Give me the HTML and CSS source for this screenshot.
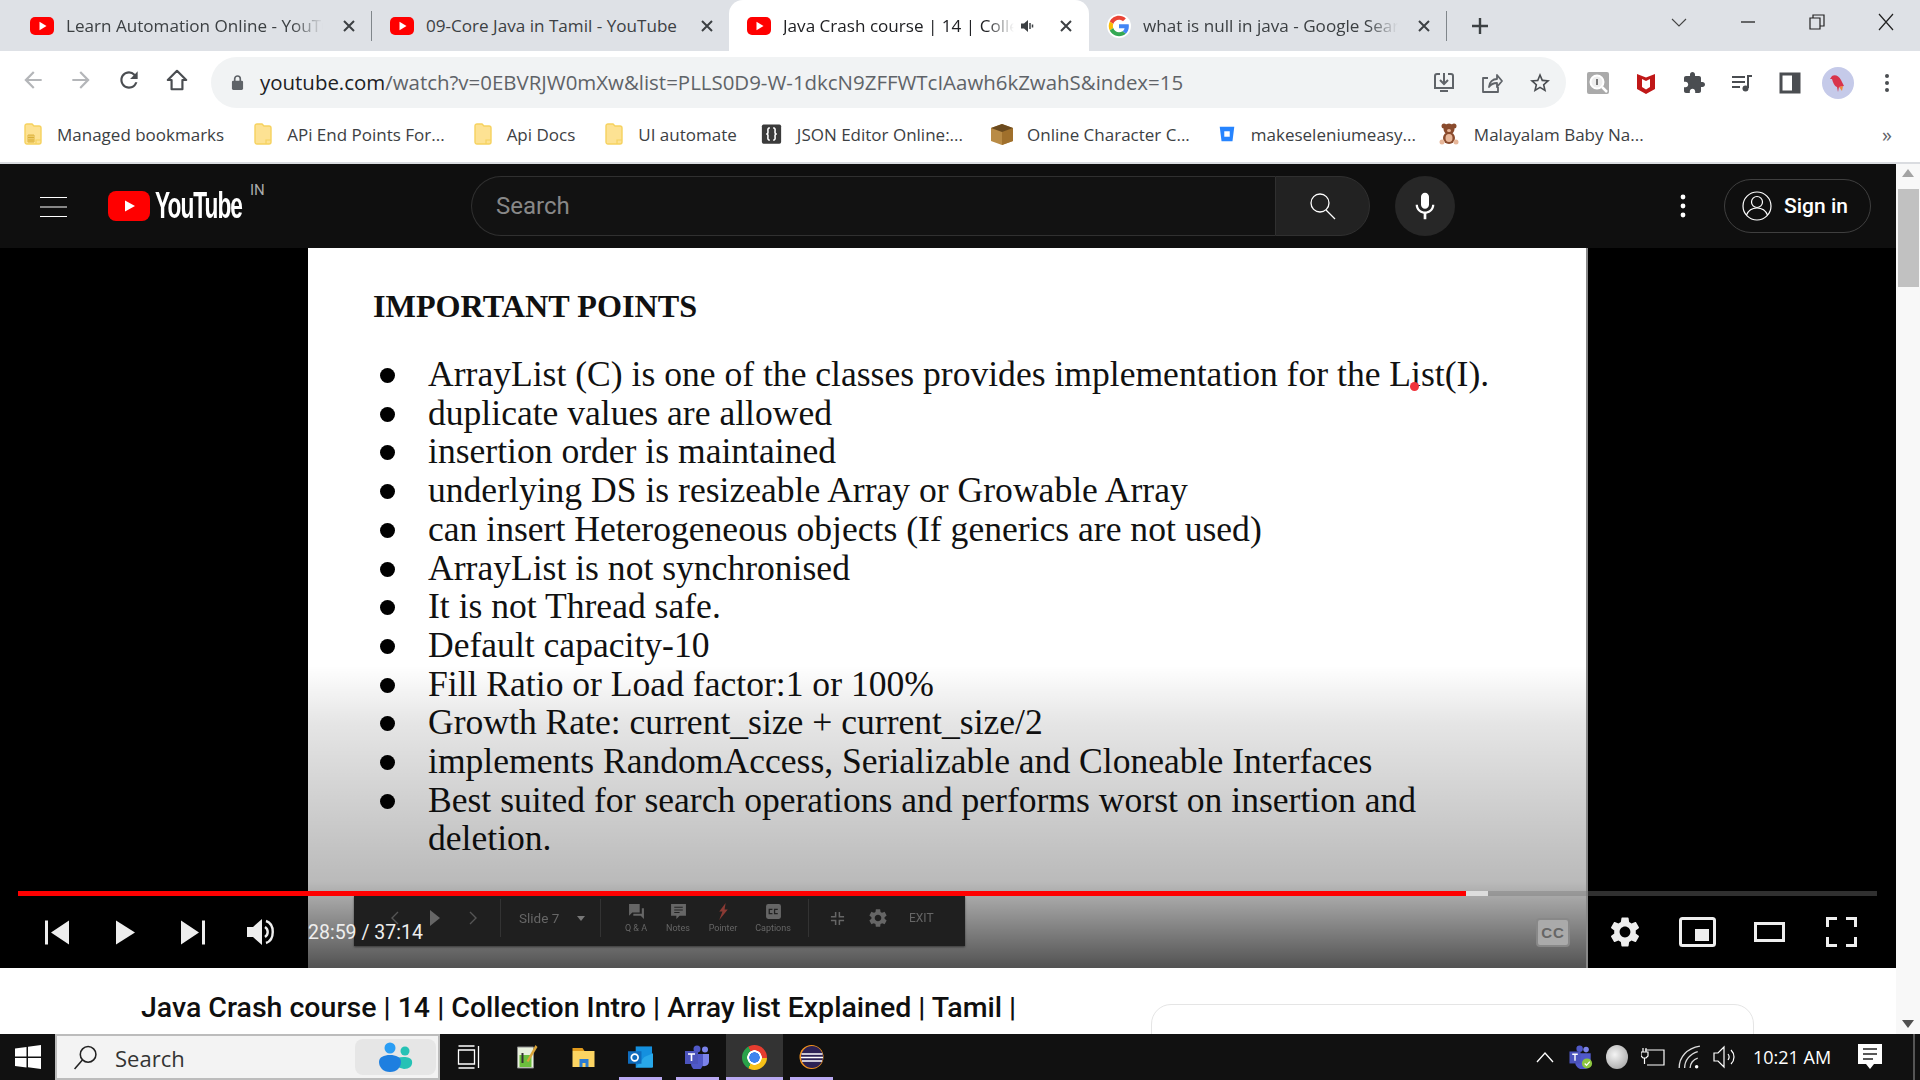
FILE: index.html
```html
<!DOCTYPE html>
<html lang="en">
<head>
  <meta charset="UTF-8" />
  <title>Java Crash course | 14 | Collection Intro | Array list Explained | Tamil | - YouTube</title>
  <link rel="stylesheet" href="styles.css">
</head>
<body>
  <svg class="defs" width="0" height="0">
    <symbol id="yt" viewBox="0 0 24 24"><rect x="0" y="3" width="24" height="18" rx="5" fill="#f00"/><path d="M9.5 7.8 16.5 12 9.5 16.2z" fill="#fff"/></symbol>
    <symbol id="close" viewBox="0 0 16 16"><path d="M3 3 13 13M13 3 3 13" stroke="#3c4043" stroke-width="2" fill="none"/></symbol>
    <symbol id="folder" viewBox="0 0 18 22"><path d="M1 3a2 2 0 0 1 2-2h5l2 2h5a2 2 0 0 1 2 2v14a2 2 0 0 1-2 2H3a2 2 0 0 1-2-2z" fill="#fde293" stroke="#f6d25f" stroke-width="1.4"/><path d="M12 21v-4h5" fill="none" stroke="#f6d25f" stroke-width="1.2"/></symbol>
    <symbol id="gear" viewBox="0 0 24 24"><path d="M19.14 12.94c.04-.3.06-.61.06-.94 0-.32-.02-.64-.07-.94l2.03-1.58c.18-.14.23-.41.12-.61l-1.92-3.32c-.12-.22-.37-.29-.59-.22l-2.39.96c-.5-.38-1.03-.7-1.62-.94l-.36-2.54c-.04-.24-.24-.41-.48-.41h-3.84c-.24 0-.43.17-.47.41l-.36 2.54c-.59.24-1.13.57-1.62.94l-2.39-.96c-.22-.08-.47 0-.59.22L2.74 8.87c-.12.21-.08.47.12.61l2.03 1.58c-.05.3-.09.63-.09.94s.02.64.07.94l-2.03 1.58c-.18.14-.23.41-.12.61l1.92 3.32c.12.22.37.29.59.22l2.39-.96c.5.38 1.03.7 1.62.94l.36 2.54c.05.24.24.41.48.41h3.84c.24 0 .44-.17.47-.41l.36-2.54c.59-.24 1.13-.56 1.62-.94l2.39.96c.22.08.47 0 .59-.22l1.92-3.32c.12-.22.07-.47-.12-.61l-2.01-1.58zM12 15.6c-1.98 0-3.6-1.62-3.6-3.6s1.62-3.6 3.6-3.6 3.6 1.62 3.6 3.6-1.62 3.6-3.6 3.6z" fill="currentColor"/></symbol>
  </svg>

  <div class="tabstrip">
    <div class="tab sep">
      <svg class="favicon"><use href="#yt"/></svg>
      <span class="tab-title">Learn Automation Online - YouTube</span>
      <svg class="tab-close"><use href="#close"/></svg>
    </div>
    <div class="tab">
      <svg class="favicon"><use href="#yt"/></svg>
      <span class="tab-title">09-Core Java in Tamil - YouTube</span>
      <svg class="tab-close"><use href="#close"/></svg>
    </div>
    <div class="tab active">
      <svg class="favicon"><use href="#yt"/></svg>
      <span class="tab-title">Java Crash course | 14 | Collection Intro</span>
      <svg class="tab-sound" viewBox="0 0 16 16"><path d="M1 5.5h3L8 2v12L4 10.5H1z" fill="#3c4043"/><path d="M10 5v6M12.5 6.5v3" stroke="#3c4043" stroke-width="1.5"/></svg>
      <svg class="tab-close"><use href="#close"/></svg>
    </div>
    <div class="tab sep">
      <svg class="favicon" viewBox="-4 -4 56 56">
        <circle cx="24" cy="24" r="28" fill="#fff"/>
        <path fill="#EA4335" d="M24 9.5c3.54 0 6.71 1.22 9.21 3.6l6.85-6.85C35.9 2.38 30.47 0 24 0 14.62 0 6.51 5.38 2.56 13.22l7.98 6.19C12.43 13.72 17.74 9.5 24 9.5z"/>
        <path fill="#4285F4" d="M46.98 24.55c0-1.57-.15-3.09-.38-4.55H24v9.02h12.94c-.58 2.96-2.26 5.48-4.78 7.18l7.73 6c4.51-4.18 7.09-10.36 7.09-17.65z"/>
        <path fill="#FBBC05" d="M10.53 28.59c-.48-1.45-.76-2.99-.76-4.59s.27-3.14.76-4.59l-7.98-6.19C.92 16.46 0 20.12 0 24c0 3.88.92 7.54 2.56 10.78l7.97-6.19z"/>
        <path fill="#34A853" d="M24 48c6.48 0 11.93-2.13 15.89-5.81l-7.73-6c-2.15 1.45-4.92 2.3-8.16 2.3-6.26 0-11.57-4.22-13.47-9.91l-7.98 6.19C6.51 42.62 14.62 48 24 48z"/>
      </svg>
      <span class="tab-title">what is null in java - Google Search</span>
      <svg class="tab-close"><use href="#close"/></svg>
    </div>
    <svg class="new-tab" viewBox="0 0 20 20"><path d="M10 2v16M2 10h16" stroke="#3c4043" stroke-width="2.4"/></svg>
    <div class="win-buttons">
      <svg viewBox="0 0 20 20"><path d="M3 7l7 7 7-7" stroke="#444" fill="none" stroke-width="1.1"/></svg>
      <svg viewBox="0 0 20 20"><path d="M3 10h14" stroke="#222" stroke-width="1.3"/></svg>
      <svg viewBox="0 0 20 20"><path d="M3 6h10v11H3zM6 6V3h11v11h-4" stroke="#222" fill="none" stroke-width="1.2"/></svg>
      <svg viewBox="0 0 20 20"><path d="M3 2l14 16M17 2 3 18" stroke="#222" fill="none" stroke-width="1.2"/></svg>
    </div>
  </div>

  <div class="toolbar">
    <svg class="nav-icon" viewBox="0 0 24 24"><path d="M20 11H7.83l5.59-5.59L12 4l-8 8 8 8 1.41-1.41L7.83 13H20v-2z" fill="#b4b6b9"/></svg>
    <svg class="nav-icon" viewBox="0 0 24 24"><path d="M4 11h12.17l-5.59-5.59L12 4l8 8-8 8-1.41-1.41L16.17 13H4v-2z" fill="#b4b6b9"/></svg>
    <svg class="nav-icon" viewBox="0 0 24 24"><path d="M17.65 6.35A7.958 7.958 0 0012 4c-4.42 0-7.99 3.58-7.99 8s3.57 8 7.99 8c3.73 0 6.84-2.55 7.73-6h-2.08A5.99 5.99 0 0112 18c-3.31 0-6-2.69-6-6s2.69-6 6-6c1.66 0 3.14.69 4.22 1.78L13 11h7V4l-2.35 2.35z" fill="#4a4d51"/></svg>
    <svg class="nav-icon" viewBox="0 0 24 24"><path d="M12 3.5 3.5 12H7v8.5h10V12h3.5z" fill="none" stroke="#4a4d51" stroke-width="2" stroke-linejoin="round"/></svg>
    <div class="omnibox">
      <svg class="lock" viewBox="0 0 14 18"><path d="M4 8V5a3 3 0 0 1 6 0v3" fill="none" stroke="#5f6368" stroke-width="1.8"/><rect x="1" y="7" width="12" height="10" rx="1.5" fill="#5f6368"/></svg>
      <span class="url"><b>youtube.com</b>/watch?v=0EBVRJW0mXw&amp;list=PLLS0D9-W-1dkcN9ZFFWTcIAawh6kZwahS&amp;index=15</span>
      <svg class="omni-icon" viewBox="0 0 24 24"><path d="M8 3H5a2 2 0 0 0-2 2v12h18V5a2 2 0 0 0-2-2h-3M12 2v10M8 9l4 4 4-4M8 20h8" fill="none" stroke="#5f6368" stroke-width="2"/></svg>
      <svg class="omni-icon" viewBox="0 0 24 24"><path d="M8 7H3v14h15v-5M9 16c0-5 4-8 8-8V4l5 6-5 6v-4c-3 0-6 1-8 4z" fill="none" stroke="#5f6368" stroke-width="1.8" stroke-linejoin="round"/></svg>
      <svg class="omni-icon" viewBox="0 0 24 24"><path d="M22 9.24l-7.19-.62L12 2 9.19 8.63 2 9.24l5.46 4.73L5.82 21 12 17.27 18.18 21l-1.63-7.03L22 9.24zM12 15.4l-3.76 2.27 1-4.28-3.32-2.88 4.38-.38L12 6.1l1.71 4.04 4.38.38-3.32 2.88 1 4.28L12 15.4z" fill="#4a4d51"/></svg>
    </div>
    <div class="ext-icons">
      <svg viewBox="0 0 24 24"><rect x="1" y="1" width="22" height="22" rx="2" fill="#aaa"/><circle cx="11" cy="11" r="6.5" fill="#eee" stroke="#fff" stroke-width="2"/><path d="M11 8v6" stroke="#777" stroke-width="2"/><path d="M16 16l5 5" stroke="#fff" stroke-width="2.5"/></svg>
      <svg viewBox="0 0 24 24"><path d="M3 3l9 3.5L21 3v15l-9 5-9-5z" fill="#c01818"/><path d="M8 8l4 2 4-2v8l-4 2.5L8 16z" fill="#fff"/></svg>
      <svg viewBox="0 0 24 24"><path d="M20.5 11H19V7c0-1.1-.9-2-2-2h-4V3.5C13 2.12 11.88 1 10.5 1S8 2.12 8 3.5V5H4c-1.1 0-1.99.9-1.99 2v3.8H3.5c1.49 0 2.7 1.21 2.7 2.7s-1.21 2.7-2.7 2.7H2V20c0 1.1.9 2 2 2h3.8v-1.5c0-1.49 1.21-2.7 2.7-2.7 1.49 0 2.7 1.21 2.7 2.7V22H17c1.1 0 2-.9 2-2v-4h1.5c1.38 0 2.5-1.12 2.5-2.5S21.88 11 20.5 11z" fill="#4a4d51"/></svg>
      <svg viewBox="0 0 24 24"><path d="M2 6h13M2 11h13M2 16h8" stroke="#4a4d51" stroke-width="2"/><path d="M18 4v13" stroke="#4a4d51" stroke-width="2"/><path d="M18 4h4v2h-4z" fill="#4a4d51"/><circle cx="15.5" cy="17.5" r="3" fill="#4a4d51"/></svg>
      <svg viewBox="0 0 24 24"><rect x="3" y="3" width="18" height="18" fill="none" stroke="#4a4d51" stroke-width="3"/><rect x="14" y="3" width="7" height="18" fill="#4a4d51"/></svg>
      <div class="avatar"><svg viewBox="0 0 24 24"><path d="M6 5c3-2 7 0 9 4l3 6-5 1-1 5-1-5c-3-1-4-5-5-8l-2 0z" fill="#d8344b"/><path d="M13 16l4-1-1 5z" fill="#f08a3c"/></svg></div>
      <svg viewBox="0 0 24 24"><circle cx="12" cy="5" r="2" fill="#4a4d51"/><circle cx="12" cy="12" r="2" fill="#4a4d51"/><circle cx="12" cy="19" r="2" fill="#4a4d51"/></svg>
    </div>
  </div>

  <div class="bookmarks">
    <a class="mark"><svg class="mark-icon" viewBox="0 0 18 22"><use href="#folder"/><path d="M4 12h6v7H4zM4 14.5h6M4 17h6M6 12v7M8 12v7" fill="none" stroke="#d6a92c" stroke-width=".8"/></svg>Managed bookmarks</a>
    <a class="mark"><svg class="mark-icon"><use href="#folder"/></svg>APi End Points For...</a>
    <a class="mark"><svg class="mark-icon"><use href="#folder"/></svg>Api Docs</a>
    <a class="mark"><svg class="mark-icon"><use href="#folder"/></svg>UI automate</a>
    <a class="mark"><svg class="mark-icon wide" viewBox="0 0 24 24"><rect x="1" y="1" width="22" height="22" rx="2" fill="#3b3b3b"/><path d="M10 5c-3 0-2 3-2 5 0 1-1 2-2 2 1 0 2 1 2 2 0 2-1 5 2 5M14 5c3 0 2 3 2 5 0 1 1 2 2 2-1 0-2 1-2 2 0 2 1 5-2 5" fill="none" stroke="#fff" stroke-width="1.8"/></svg>JSON Editor Online:...</a>
    <a class="mark"><svg class="mark-icon box" viewBox="0 0 24 24"><path d="M12 2 23 6v13L12 23 1 19V6z" fill="#b98b45"/><path d="M12 9v14L23 19V6z" fill="#a0702c"/><path d="M12 2 23 6 12 10 1 6z" fill="#6b4a1e"/></svg>Online Character C...</a>
    <a class="mark"><svg class="mark-icon small" viewBox="0 0 18 22"><path d="M1 3h16l-2 16H3z" fill="#2684ff"/><rect x="6" y="8" width="6" height="6" fill="#fff"/></svg>makeseleniumeasy...</a>
    <a class="mark"><svg class="mark-icon box" viewBox="0 0 24 24"><circle cx="7" cy="4" r="2.5" fill="#8a4b2d"/><circle cx="17" cy="4" r="2.5" fill="#8a4b2d"/><circle cx="12" cy="7" r="5.5" fill="#8a4b2d"/><ellipse cx="12" cy="8.5" rx="2" ry="1.5" fill="#e7b79a"/><ellipse cx="12" cy="16" rx="6" ry="6" fill="#8a4b2d"/><ellipse cx="12" cy="16" rx="3.5" ry="4" fill="#e7b79a"/><circle cx="5" cy="20" r="2.5" fill="#e7b79a"/><circle cx="19" cy="20" r="2.5" fill="#e7b79a"/></svg>Malayalam Baby Na...</a>
    <span class="more">&raquo;</span>
  </div>

  <div class="viewport">
    <div class="content">
      <header class="yt-header">
        <svg class="burger" viewBox="0 0 27 20"><path d="M0 1h27M0 10.5h27M0 20h27" stroke="#fff" stroke-width="1.2" fill="none"/></svg>
        <div class="logo">
          <svg class="logo-mark" viewBox="0 0 42 30"><rect width="42" height="30" rx="8" fill="#f00"/><path d="M17 9.5 27 15 17 20.5z" fill="#fff"/></svg>
          <span class="logo-text">YouTube</span>
          <span class="logo-cc">IN</span>
        </div>
        <div class="search">
          <div class="search-input">Search</div>
          <div class="search-btn"><svg viewBox="0 0 28 28"><circle cx="12" cy="11" r="9" fill="none" stroke="#fff" stroke-width="1.3"/><path d="M18 18l9 9" stroke="#fff" stroke-width="1.3"/></svg></div>
        </div>
        <div class="mic"><svg viewBox="0 0 24 24"><path d="M12 14c1.66 0 3-1.34 3-3V5c0-1.66-1.34-3-3-3S9 3.34 9 5v6c0 1.66 1.34 3 3 3zm5.3-3c0 3-2.54 5.1-5.3 5.1S6.7 14 6.7 11H5c0 3.41 2.72 6.23 6 6.72V22h2v-4.28c3.28-.49 6-3.31 6-6.72h-1.7z" fill="#fff"/></svg></div>
        <svg class="yt-dots" viewBox="0 0 6 24"><circle cx="3" cy="3" r="2.4" fill="#fff"/><circle cx="3" cy="12" r="2.4" fill="#fff"/><circle cx="3" cy="21" r="2.4" fill="#fff"/></svg>
        <div class="signin">
          <svg viewBox="0 0 30 30"><circle cx="15" cy="15" r="14" fill="none" stroke="#fff" stroke-width="1.2"/><circle cx="15" cy="11" r="5.5" fill="none" stroke="#fff" stroke-width="1.2"/><path d="M4.5 24c2-5 6-7 10.500-7s8.500 2 10.500 7" fill="none" stroke="#fff" stroke-width="1.2"/></svg>
          <span>Sign in</span>
        </div>
      </header>

      <section class="player">
        <div class="slide">
          <h1 class="slide-title">IMPORTANT POINTS</h1>
          <ul class="slide-list">
            <li>ArrayList (C) is one of the classes provides implementation for the List(I).</li>
            <li>duplicate values are allowed</li>
            <li>insertion order is maintained</li>
            <li>underlying DS is resizeable Array or Growable Array</li>
            <li>can insert Heterogeneous objects (If generics are not used)</li>
            <li>ArrayList is not synchronised</li>
            <li>It is not Thread safe.</li>
            <li>Default capacity-10</li>
            <li>Fill Ratio or Load factor:1 or 100%</li>
            <li>Growth Rate: current_size + current_size/2</li>
            <li>implements RandomAccess, Serializable and Cloneable Interfaces</li>
            <li>Best suited for search operations and performs worst on insertion and deletion.</li>
          </ul>
          <span class="laser"></span>
          <div class="dim"></div>
          <div class="slide-bar">
            <svg class="sb-nav" viewBox="0 0 10 16"><path d="M8 2 2 8l6 6" fill="none" stroke="#555" stroke-width="1.4"/></svg>
            <svg class="sb-play" viewBox="0 0 10 16"><path d="M0 0l10 8-10 8z" fill="#666"/></svg>
            <svg class="sb-nav last" viewBox="0 0 10 16"><path d="M2 2l6 6-6 6" fill="none" stroke="#555" stroke-width="1.4"/></svg>
            <i class="sb-sep"></i>
            <span class="sb-slide">Slide 7</span>
            <span class="sb-caret"></span>
            <i class="sb-sep"></i>
            <div class="sb-item"><svg viewBox="0 0 16 16"><path d="M1 1h10v8H4l-3 3z M13 5h2v10l-3-3H5v-2h8z" fill="#666"/></svg><span>Q &amp; A</span></div>
            <div class="sb-item notes"><svg viewBox="0 0 16 16"><path d="M1 1h14v11H9l-3 3v-3H1z" fill="#666"/><path d="M4 4h8M4 6.500h8M4 9h5" stroke="#222" stroke-width="1"/></svg><span>Notes</span></div>
            <div class="sb-item pointer"><svg viewBox="0 0 16 16"><path d="M10 0 4 8h3l-3 8 8-10H9z" fill="#8a3a34"/></svg><span>Pointer</span></div>
            <div class="sb-item captions"><svg viewBox="0 0 16 16"><rect x="1" y="1" width="14" height="14" rx="2" fill="#666"/><path d="M7 6H4v4h3M12 6H9v4h3" fill="none" stroke="#222" stroke-width="1.2"/></svg><span>Captions</span></div>
            <i class="sb-sep end"></i>
            <svg class="sb-collapse" viewBox="0 0 16 16"><path d="M6 1v5H1M10 1v5h5M6 15v-5H1M10 15v-5h5" fill="none" stroke="#666" stroke-width="1.6"/></svg>
            <svg class="sb-gear"><use href="#gear"/></svg>
            <span class="sb-exit">EXIT</span>
          </div>
        </div>

        <div class="controls">
          <div class="progress"><div class="played"></div><div class="loaded"></div></div>
          <div class="ctl-row">
            <div class="ctl"><svg class="i-prev" viewBox="0 0 24 24"><path d="M0 0h3v24H0zM24 0v24L6 12z" fill="#eee"/></svg></div>
            <div class="ctl"><svg class="i-play" viewBox="0 0 19 24"><path d="M0 0l19 12L0 24z" fill="#eee"/></svg></div>
            <div class="ctl"><svg class="i-prev" viewBox="0 0 24 24"><path d="M21 0h3v24h-3zM0 0v24l18-12z" fill="#eee"/></svg></div>
            <div class="ctl"><svg class="i-vol" viewBox="0 0 28 26"><path d="M0 8h6l9-8v26l-9-8H0z" fill="#eee"/><path d="M18 8a6 6 0 0 1 0 10" fill="none" stroke="#eee" stroke-width="2.400"/><path d="M19 2c9 3 9 19 0 22" fill="none" stroke="#eee" stroke-width="2.400"/></svg></div>
            <span class="time">28:59 / 37:14</span>
            <div class="ctl-right">
              <div class="ctl r"><div class="cc-badge">CC</div></div>
              <div class="ctl r"><svg class="i-gear"><use href="#gear"/></svg></div>
              <div class="ctl r"><svg class="i-mini" viewBox="0 0 37 30"><rect x="1.500" y="1.500" width="34" height="27" rx="2" fill="none" stroke="#eee" stroke-width="3"/><rect x="16" y="12" width="14" height="12" fill="#eee"/></svg></div>
              <div class="ctl r"><svg class="i-theater" viewBox="0 0 31 20"><rect x="1.500" y="1.500" width="28" height="17" fill="none" stroke="#eee" stroke-width="3"/></svg></div>
              <div class="ctl r"><svg class="i-mini" viewBox="0 0 31 30"><path d="M1.500 10V1.500H11M20 1.500h9.500V10M29.500 20v8.500H20M11 28.500H1.500V20" fill="none" stroke="#eee" stroke-width="3"/></svg></div>
            </div>
          </div>
        </div>
      </section>

      <section class="below">
        <h2 class="video-title">Java Crash course | 14 | Collection Intro | Array list Explained | Tamil |</h2>
        <div class="playlist-card"><p>09-Core Java in Tamil</p></div>
      </section>
    </div>
    <div class="scrollbar">
      <span class="arrow up"></span>
      <div class="thumb"></div>
      <span class="arrow down"></span>
    </div>
  </div>

  <footer class="taskbar">
    <div class="start"><svg viewBox="0 0 26 24"><path d="M0 3.500 11.500 2v9.500H0zM13 1.800 26 0v11.500H13zM0 13h11.500v9.500L0 21zM13 13h13v11l-13-1.800z" fill="#fff"/></svg></div>
    <div class="tb-search">
      <svg class="tb-glass" viewBox="0 0 24 24"><circle cx="14.500" cy="9" r="7.500" fill="none" stroke="#222" stroke-width="1.500"/><path d="M9 14.500 1.500 23" stroke="#222" stroke-width="1.500"/></svg>
      <span class="tb-label">Search</span>
      <div class="tb-chip"><svg viewBox="0 0 42 30"><circle cx="15" cy="6" r="5.500" fill="#2a9df4"/><circle cx="30" cy="9" r="4.500" fill="#25c2b5"/><path d="M22 16c7-2 14-1 15 3 1 5-3 8-8 8l-7-2z" fill="#25c2b5"/><path d="M4 20c0-5 5-7 11-7s11 2 11 7-4 10-11 10S4 25 4 20z" fill="#1e7fe0"/></svg></div>
    </div>
    <div class="tb-apps">
      <div class="tb-app"><svg viewBox="0 0 24 24"><path d="M1 1h16M1 23h16M1 5h16v14H1zM21 1v22M21 10v3" fill="none" stroke="#fff" stroke-width="1.300"/></svg></div>
      <div class="tb-app"><svg viewBox="0 0 22 24"><path d="M2 2h16v21H2z" fill="#e8f0dc" stroke="#888"/><path d="M4 10h12v12H4z" fill="#6cbf3d"/><path d="M6 8h2v10H6z" fill="#333"/><path d="M20 0 11 16l2 1 9-15z" fill="#d9a43a"/></svg></div>
      <div class="tb-app"><svg viewBox="0 0 24 24"><path d="M1 3h10l2 3H1z" fill="#e29b1c"/><path d="M1 6h22v16H1z" fill="#fcd462"/><path d="M8 14h9v8h-3v-4h-3v4H8z" fill="#2b7cd3"/></svg></div>
      <div class="tb-app run"><svg viewBox="0 0 26 24"><path d="M8 1h17v22H8z" fill="#1490df"/><path d="M17 12l9-4v15H8z" fill="#28a8ea"/><rect x="0" y="6" width="14" height="13" fill="#0f6cbd"/><circle cx="7" cy="12.500" r="3.500" fill="none" stroke="#fff" stroke-width="1.800"/></svg></div>
      <div class="tb-app run"><svg viewBox="0 0 25 24"><circle cx="20" cy="4.500" r="3" fill="#7b83eb"/><path d="M15 9h9v8a5 5 0 0 1-9 2z" fill="#7b83eb"/><circle cx="12" cy="4" r="3.500" fill="#5059c9"/><path d="M6 9h12v10a6 6 0 0 1-12 0z" fill="#5059c9"/><rect x="0" y="6" width="13" height="13" fill="#4b53bc"/><path d="M3 9h7M6.500 9v7" stroke="#fff" stroke-width="1.600"/></svg></div>
      <div class="tb-app run active"><div class="chrome"></div></div>
      <div class="tb-app run"><svg viewBox="0 0 24 24"><circle cx="12" cy="12" r="12" fill="#f7941e"/><circle cx="12.500" cy="12" r="11" fill="#2c2255"/><path d="M2 9h21M1.500 12.500h22M2.500 16h20" stroke="#fff" stroke-width="1.600"/></svg></div>
    </div>
    <div class="tray">
      <div class="tray-item"><svg class="t-caret" viewBox="0 0 18 12"><path d="M1 11l8-9 8 9" fill="none" stroke="#fff" stroke-width="1.300"/></svg></div>
      <div class="tray-item"><svg viewBox="0 0 25 26"><circle cx="18" cy="5" r="3" fill="#7b83eb"/><circle cx="11" cy="4" r="3.500" fill="#5059c9"/><path d="M6 9h17v9a6 6 0 0 1-17 0z" fill="#5059c9"/><rect x="0" y="7" width="12" height="13" fill="#4b53bc"/><path d="M3 10h6M6 10v7" stroke="#fff" stroke-width="1.500"/><circle cx="19" cy="20" r="5.500" fill="#8dc63f"/><path d="M16.500 20l2 2 3.500-4" fill="none" stroke="#fff" stroke-width="1.300"/></svg></div>
      <div class="tray-item"><div class="globe"></div></div>
      <div class="tray-item"><svg viewBox="0 0 24 24"><path d="M4 5h19v15H6M2 3v4M5 3v4M0 7h7v4l-2 2H2l-2-2zM3.500 13v6" fill="none" stroke="#fff" stroke-width="1.200"/></svg></div>
      <div class="tray-item"><svg viewBox="0 0 22 22"><path d="M2 21C2 11 9 3 21 1M7 21c0-7 5-13 12-15M12 21c0-4 3-8 7-9" fill="none" stroke="#ddd" stroke-width="1.200"/><circle cx="18" cy="20" r="1.600" fill="#fff"/></svg></div>
      <div class="tray-item"><svg viewBox="0 0 24 22"><path d="M1 7h4l6-6v20l-6-6H1zM15 8a5 5 0 0 1 0 6M18 4c4 4 4 10 0 14" fill="none" stroke="#fff" stroke-width="1.200"/></svg></div>
      <span class="clock">10:21 AM</span>
      <div class="notify"><svg viewBox="0 0 24 26"><path d="M0 0h24v20h-8l-4 5-4-5H0z" fill="#fff"/><path d="M5 5h14M5 10h14M5 15h10" stroke="#222" stroke-width="1.300"/></svg></div>
      <i class="show-desktop"></i>
    </div>
  </footer>
</body>
</html>
```

FILE: styles.css
```css
* { box-sizing: border-box; }
html, body { margin: 0; padding: 0; }
body { width: 1920px; height: 1080px; overflow: hidden; display: flex; flex-direction: column; font-family: "Open Sans", "Noto Sans", sans-serif; background: #fff; }
.defs { position: absolute; }

/* browser tabs */
.tabstrip { height: 51px; flex: none; background: #dee1e6; display: flex; align-items: stretch; padding-left: 12px; }
.tab { width: 358px; display: flex; align-items: center; padding: 0 15px 0 18px; position: relative; font-size: 17.1px; color: #3c4043; }
.tab:first-child { width: 360px; }
.tab.active { background: #fff; border-radius: 14px 14px 0 0; color: #202124; width: 360px; margin-left: -1px; }
.tab.sep::after { content: ""; position: absolute; right: 0; top: 11px; height: 30px; width: 1px; background: #80868b; }
.favicon { width: 24px; height: 24px; flex: none; }
.tab-title { flex: 1; margin: 0 18px 0 12px; white-space: nowrap; overflow: hidden; -webkit-mask-image: linear-gradient(90deg, #000 88%, transparent); mask-image: linear-gradient(90deg, #000 88%, transparent); }
.tab:nth-child(2) .tab-title { margin-right: 14px; -webkit-mask-image: none; mask-image: none; }
.tab.active .tab-title { margin-right: 12px; }
.tab-close { width: 16px; height: 16px; flex: none; }
.tab-sound { width: 16px; height: 16px; flex: none; margin-right: 22px; margin-left: -6px; }
.new-tab { width: 20px; height: 20px; align-self: center; margin-left: 23px; }
.win-buttons { margin-left: auto; display: flex; align-items: center; height: 100%; padding-bottom: 8px; }
.win-buttons svg { width: 20px; height: 20px; margin-right: 49px; }
.win-buttons svg:last-child { margin-right: 24px; }

/* address bar */
.toolbar { height: 57px; flex: none; background: #fff; display: flex; align-items: center; padding-left: 20px; }
.nav-icon { width: 26px; height: 26px; margin-right: 22px; flex: none; }
.omnibox { width: 1355px; height: 51px; margin-top: 6px; margin-left: -1px; background: #f1f3f4; border-radius: 26px; display: flex; align-items: center; padding: 0 14px 0 20px; }
.lock { width: 13px; height: 17px; flex: none; }
.url { flex: 1; margin-left: 16px; padding-bottom: 2px; font-size: 20.45px; color: #5f6368; white-space: nowrap; }
.url b { font-weight: 400; color: #202124; }
.omni-icon { width: 24px; height: 24px; margin-left: 24px; flex: none; }
.ext-icons { display: flex; align-items: center; margin-left: 20px; margin-top: 6px; }
.ext-icons svg { width: 24px; height: 24px; margin-right: 24px; flex: none; }
.ext-icons svg:last-child { margin-right: 0; margin-left: -3px; }
.avatar { width: 32px; height: 32px; border-radius: 50%; background: #c5cae9; margin: 0 24px 0 -4px; display: flex; align-items: center; justify-content: center; }
.avatar svg { width: 24px; height: 24px; margin: 0 !important; }

/* bookmarks */
.bookmarks { height: 56px; flex: none; display: flex; align-items: center; padding: 0 0 2px 24px; background: #fff; border-bottom: 2px solid #dadce0; font-size: 17px; color: #3c4043; }
.mark { display: flex; align-items: center; margin-right: 28px; white-space: nowrap; }
.mark:nth-child(1) { margin-right: 30px; }
.mark:nth-child(2) { margin-right: 29px; }
.mark:nth-child(3) { margin-right: 30px; }
.mark:nth-child(4) { margin-right: 24px; }
.mark:nth-child(5) { margin-right: 27px; }
.mark:nth-child(7) { margin-right: 21px; }
.mark-icon { width: 18px; height: 22px; margin-right: 15px; flex: none; }
.mark-icon.wide { width: 21px; height: 24px; }
.mark-icon.box { width: 24px; height: 26px; margin-right: 13px; }
.mark-icon.small { width: 18px; height: 20px; }
.more { margin-left: auto; margin-right: 28px; color: #5f6368; font-size: 20px; }

.viewport { flex: 1; min-height: 0; display: flex; }
.content { width: 1896px; overflow: hidden; display: flex; flex-direction: column; }

/* youtube masthead */
.yt-header { height: 84px; flex: none; background: #0f0f0f; display: flex; align-items: center; padding-left: 40px; }
.burger { width: 27px; height: 21px; flex: none; }
.logo { display: flex; align-items: center; margin-left: 41px; width: 363px; position: relative; }
.logo-mark { width: 42px; height: 30px; flex: none; }
.logo-text { font-family: "Liberation Sans", sans-serif; font-weight: 700; font-size: 36px; letter-spacing: -1.5px; color: #fff; margin-left: 5px; transform: scaleX(.63); transform-origin: left center; }
.logo-cc { position: absolute; left: 142px; top: -4px; font-family: Roboto, sans-serif; font-size: 15px; color: #aaa; }
.search { width: 899px; height: 60px; display: flex; }
.search-input { flex: 1; background: #121212; border: 1px solid #303030; border-right: none; border-radius: 30px 0 0 30px; padding-left: 24px; display: flex; align-items: center; font-family: Roboto, sans-serif; font-size: 24px; color: #888; }
.search-btn { width: 95px; background: #222; border: 1px solid #303030; border-radius: 0 30px 30px 0; display: flex; align-items: center; justify-content: center; padding-right: 1px; }
.search-btn svg { width: 28px; height: 28px; }
.mic { width: 60px; height: 60px; border-radius: 50%; background: #272727; margin-left: 25px; display: flex; align-items: center; justify-content: center; }
.mic svg { width: 32px; height: 32px; }
.yt-dots { width: 6px; height: 24px; margin-left: 225px; flex: none; }
.signin { width: 147px; height: 54px; margin-left: 38px; border: 1px solid #3f3f3f; border-radius: 27px; display: flex; align-items: center; padding-left: 17px; color: #fff; font-family: Roboto, sans-serif; font-weight: 500; font-size: 21px; }
.signin svg { width: 30px; height: 30px; margin-right: 12px; }

/* video */
.player { height: 720px; flex: none; background: #000; position: relative; display: flex; justify-content: center; overflow: hidden; }
.slide { width: 1280px; height: 100%; background: #fff; border-right: 2px solid #888; position: relative; padding: 39px 0 0 65px; color: #111; font-family: "Liberation Serif", serif; }
.slide-title { margin: 0; font-size: 32.2px; line-height: 38px; font-weight: 700; color: #111; }
.slide-list { list-style: none; margin: 30px 0 0; padding: 0; width: 1140px; font-size: 35.6px; line-height: 38.7px; }
.slide-list li { position: relative; padding-left: 55px; }
.slide-list li::before { content: ""; position: absolute; left: 7px; top: 13px; width: 15px; height: 15px; border-radius: 50%; background: #000; }
.laser { position: absolute; left: 1102px; top: 134px; width: 9px; height: 9px; border-radius: 50%; background: #f0343c; }
.dim { position: absolute; inset: 0; background: linear-gradient(180deg, rgba(0,0,0,0) 58%, rgba(0,0,0,.1) 66%, rgba(0,0,0,.27) 88%, rgba(0,0,0,.68) 100%); }
.slide-bar { position: absolute; left: 46px; top: 648px; width: 611px; height: 50px; background: #1f1f1f; box-shadow: 0 1px 2px rgba(0,0,0,.5); display: flex; align-items: center; padding: 0 0 6px 36px; color: #666; font-family: Roboto, sans-serif; filter: blur(.4px); }
.sb-nav { width: 10px; height: 16px; margin-right: 30px; flex: none; }
.sb-play { width: 10px; height: 16px; margin-right: 28px; flex: none; }
.sb-nav.last { margin-right: 22px; }
.sb-sep { width: 1px; height: 38px; background: #333; flex: none; margin-right: 18px; }
.sb-slide { font-size: 13.5px; width: 58px; flex: none; }
.sb-caret { width: 0; height: 0; border: 4px solid transparent; border-top: 5px solid #777; margin: 4px 15px 0 0; flex: none; }
.sb-caret + .sb-sep { margin-right: 14px; }
.sb-item { display: flex; flex-direction: column; align-items: center; font-size: 9px; width: 42px; gap: 3px; flex: none; white-space: nowrap; }
.sb-item svg { width: 17px; height: 17px; }
.sb-item.notes { margin-right: 3px; }
.sb-item.pointer { margin-right: 8px; }
.sb-item.captions { margin-right: 14px; }
.sb-sep.end { margin-right: 21px; }
.sb-collapse { width: 15px; height: 15px; flex: none; }
.sb-gear { width: 22px; height: 22px; color: #666; margin-left: 22px; flex: none; }
.sb-exit { font-size: 12px; margin-left: 20px; }

.controls { position: absolute; left: 0; right: 0; bottom: 0; height: 77px; padding: 0 19px 0 18px; }
.progress { height: 5px; background: rgba(120,120,120,.4); position: relative; display: flex; }
.played { width: 1448px; background: #f00; }
.loaded { width: 22px; background: #ddd; }
.ctl-row { display: flex; align-items: center; height: 72px; padding-left: 5px; }
.ctl { width: 68px; display: flex; align-items: center; justify-content: center; flex: none; }
.ctl.r { width: 72px; }
.i-prev { width: 24px; height: 25px; }
.i-play { width: 19px; height: 25px; }
.i-vol { width: 28px; height: 26px; }
.time { margin-left: 13px; color: #eee; font-family: Roboto, sans-serif; font-size: 19.5px; white-space: nowrap; }
.ctl-right { margin-left: auto; display: flex; }
.cc-badge { width: 34px; height: 29px; background: #aaa; border: 2px solid #888; border-radius: 4px; color: #666; font-family: "Liberation Sans", sans-serif; font-weight: 700; font-size: 15px; text-align: center; line-height: 25px; letter-spacing: 1px; }
.i-gear { width: 36px; height: 36px; color: #eee; }
.i-mini { width: 37px; height: 30px; }
.i-theater { width: 31px; height: 20px; }

/* below the video */
.below { flex: 1; min-height: 0; display: flex; padding-left: 141px; overflow: hidden; background: #fff; }
.video-title { width: 1010px; margin: 0; font-family: Roboto, sans-serif; font-weight: 500; font-size: 28.5px; line-height: 80px; color: #0f0f0f; white-space: nowrap; flex: none; }
.playlist-card { width: 603px; height: 120px; margin-top: 36px; border: 1px solid #e5e5e5; border-radius: 20px; padding: 26px 0 0 27px; flex: none; }
.playlist-card p { margin: 0; font-family: Roboto, sans-serif; font-weight: 700; font-size: 24px; color: #0f0f0f; }

.scrollbar { width: 24px; background: #f8f8f8; display: flex; flex-direction: column; align-items: center; position: relative; padding-top: 25px; }
.thumb { width: 21px; height: 98px; background: #c1c1c1; }
.arrow { position: absolute; width: 0; height: 0; border: 6px solid transparent; }
.arrow.up { top: 5px; border-bottom: 8px solid #a3a3a3; border-top: none; }
.arrow.down { bottom: 6px; border-top: 8px solid #505050; border-bottom: none; }

/* windows taskbar */
.taskbar { height: 46px; flex: none; background: #111; display: flex; align-items: stretch; }
.start { width: 55px; display: flex; align-items: center; justify-content: center; flex: none; }
.start svg { width: 26px; height: 24px; }
.tb-search { width: 385px; background: #f3f3f3; border: 2px solid #bcbcbc; display: flex; align-items: center; padding-left: 16px; flex: none; font-size: 22px; color: #333; position: relative; }
.tb-glass { width: 25px; height: 25px; margin-right: 17px; }
.tb-label { padding-top: 2px; }
.tb-chip { position: absolute; right: 2px; top: 3px; bottom: 3px; width: 81px; background: #e6e6e6; border-radius: 8px; display: flex; align-items: center; justify-content: center; }
.tb-chip svg { width: 42px; height: 30px; }
.tb-apps { display: flex; padding-left: 1px; }
.tb-app { width: 57px; display: flex; align-items: center; justify-content: center; position: relative; }
.tb-app svg { width: 25px; height: 24px; }
.tb-app.active { background: #333; }
.tb-app.run::after { content: ""; position: absolute; left: 7px; right: 7px; bottom: 0; height: 3px; background: #b9a9f2; }
.tb-app.active::after { left: 0; right: 0; }
.chrome { width: 25px; height: 25px; border-radius: 50%; background: radial-gradient(circle, #3f84ee 0 5px, #fff 5.500px 7px, transparent 7.500px), conic-gradient(from 330deg, #e53c2f 0 120deg, #f6c018 120deg 240deg, #2aa24a 240deg 360deg); }
.tray { margin-left: auto; display: flex; align-items: center; color: #fff; }
.tray-item { width: 36px; display: flex; align-items: center; justify-content: center; }
.tray-item svg { width: 24px; height: 24px; }
.tray-item .t-caret { width: 18px; height: 12px; }
.globe { width: 22px; height: 24px; border-radius: 50%; background: radial-gradient(circle at 40% 40%, #f4f4f4, #999); }
.clock { width: 98px; text-align: center; font-size: 18px; font-family: "Open Sans", sans-serif; }
.notify { width: 58px; display: flex; justify-content: center; }
.notify svg { width: 24px; height: 26px; }
.show-desktop { width: 2px; height: 100%; background: #555; margin-left: 14px; margin-right: 5px; }
```
